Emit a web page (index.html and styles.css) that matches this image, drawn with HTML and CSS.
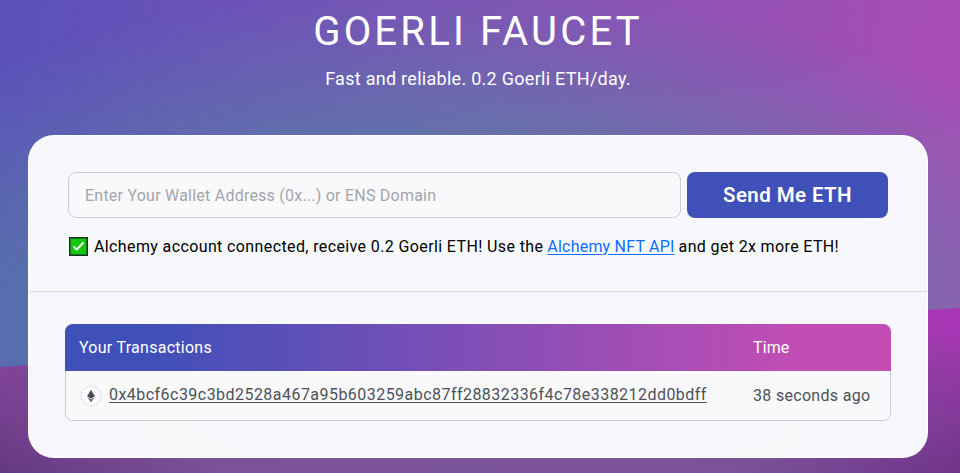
FILE: index.html
```html
<!DOCTYPE html>
<html lang="en">
<head>
<meta charset="utf-8">
<title>Goerli Faucet</title>
<link rel="stylesheet" href="styles.css">
</head>
<body>
<main class="page">
  <h1 class="title">GOERLI FAUCET</h1>
  <p class="subtitle">Fast and reliable. 0.2 Goerli ETH/day.</p>
  <section class="card">
    <div class="request">
      <form class="form">
        <input class="address" type="text" placeholder="Enter Your Wallet Address (0x...) or ENS Domain">
        <button class="send" type="button">Send Me ETH</button>
      </form>
      <p class="notice">
        <svg class="check" viewBox="0 0 19 19"><rect x=".75" y=".75" width="17.5" height="17.5" fill="#16c60c" stroke="#17331f" stroke-width="1.5"/><path d="M4.5 9.4l3.2 3.2 6.8-7.2" fill="none" stroke="#fff" stroke-width="2"/></svg>
        <span class="part-a">Alchemy account connected, receive 0.2 Goerli ETH! Use the</span>
        <a class="part-b" href="#">Alchemy NFT API</a>
        <span class="part-c">and get 2x more ETH!</span>
      </p>
    </div>
    <div class="history">
      <div class="table">
        <div class="row head"><span class="h-tx">Your Transactions</span><span class="h-time">Time</span></div>
        <div class="row body">
          <span class="tx">
            <svg class="eth" viewBox="0 0 22 22"><circle cx="11" cy="11" r="10" fill="#fafafc" stroke="#d3d5d9" stroke-dasharray="2 1"/><path d="M11 4.7L7.2 11.1l3.8 2.3 3.8-2.3z" fill="#4f525b"/><path d="M7.2 12.3l3.8 2.2 3.8-2.2L11 17.3z" fill="#5d6069"/><path d="M7.2 11.1l3.8-1.7 3.8 1.7-3.8 2.3z" fill="#3f424b"/></svg>
            <a class="hash" href="#">0x4bcf6c39c3bd2528a467a95b603259abc87ff28832336f4c78e338212dd0bdff</a>
          </span>
          <span class="ago">38 seconds ago</span>
        </div>
      </div>
    </div>
  </section>
</main>
</body>
</html>
```
FILE: styles.css
```css
* { box-sizing: border-box; }
body {
  margin: 0;
  height: 473px;
  overflow: hidden;
  font: 16px/24px Roboto, "Liberation Sans", sans-serif;
  background:
    radial-gradient(ellipse 740px 330px at 440px 320px, rgba(82, 138, 160, .8) 0%, rgba(82, 134, 162, .72) 45%, rgba(90, 125, 168, .25) 82%, rgba(90, 120, 176, 0) 100%),
    linear-gradient(96deg, #5a50ba 0%, #8055b5 50%, #ac4cb5 100%);
}
.page {
  height: 473px;
  padding: 10px 32px 0 28px;
  display: flex;
  flex-direction: column;
  position: relative;
}
.page::before {
  content: "";
  position: absolute;
  inset: 308px 0 0;
  z-index: -1;
  clip-path: polygon(0 59px, 100% 0, 100% 100%, 0 100%);
  background:
    radial-gradient(ellipse 540px 200px at 480px 110px, rgba(125, 86, 158, 1), rgba(125, 84, 155, .9) 55%, rgba(125, 82, 153, 0) 100%),
    linear-gradient(to top, rgba(78, 42, 108, .68), rgba(90, 45, 115, 0) 85%),
    linear-gradient(90deg, #8a449f, #a935b5);
}
.title {
  margin: 0;
  font-size: 40px;
  line-height: 44px;
  font-weight: 400;
  letter-spacing: 3.2px;
  color: #fff;
  text-align: center;
}
.subtitle {
  margin: 13px 0 44px;
  font-size: 18px;
  line-height: 24px;
  letter-spacing: .28px;
  color: #fff;
  text-align: center;
}
.card {
  height: 323px;
  border: 1px solid rgba(255, 255, 255, .96);
  border-radius: 26px;
  background: rgba(252, 253, 254, .965);
}
.request {
  height: 156px;
  padding: 36px 39px 0;
  border-bottom: 1px solid #d5d7da;
}
.form { display: flex; gap: 6px; }
.address {
  width: 613px;
  height: 46px;
  padding: 1px 15px 0 16px;
  border: 1px solid #c9ccd1;
  border-radius: 8px;
  background: #f9f9fb;
  font: inherit;
  letter-spacing: .23px;
}
.address::placeholder { color: #a2a5ac; opacity: 1; }
.send {
  width: 201px;
  height: 46px;
  padding: 0;
  border: 0;
  border-radius: 8px;
  background: #3f50b8;
  color: #fff;
  font: 600 20.5px/24px Roboto, sans-serif;
  letter-spacing: .4px;
}
.notice {
  display: flex;
  align-items: center;
  margin: 17px 0 0;
  color: #000;
  white-space: nowrap;
}
.check { width: 19px; height: 19px; margin: -1px 6px 0 1px; }
.part-a { letter-spacing: .38px; }
.notice .part-b {
  margin: 0 4px;
  color: #0d6efd;
  letter-spacing: .21px;
  text-underline-offset: 2px;
}
.part-c { letter-spacing: .36px; }
.history { padding: 32px 36px 0; }
.table {
  height: 97px;
  border: 1px solid #c9ccd1;
  border-top: 0;
  border-radius: 8px;
}
.row {
  display: grid;
  grid-template-columns: 674px 1fr;
  align-items: center;
}
.head {
  height: 47px;
  margin: 0 -1px;
  padding-left: 14px;
  border-radius: 8px 8px 0 0;
  background: linear-gradient(90deg, #3f50b8 10%, #c44db4 90%);
  color: #fff;
}
.body {
  height: 49px;
  padding-left: 13px;
  border-radius: 0 0 7px 7px;
  background: #f9f9fb;
  color: #4d5158;
}
.h-tx { letter-spacing: .27px; }
.h-time { letter-spacing: .1px; }
.ago { letter-spacing: .31px; }
.tx { display: flex; align-items: center; gap: 7px; }
.eth { width: 22px; height: 22px; margin-left: 1px; }
.hash {
  margin-top: -2px;
  color: inherit;
  line-height: 22px;
  letter-spacing: .46px;
  text-underline-offset: 2px;
}
```
